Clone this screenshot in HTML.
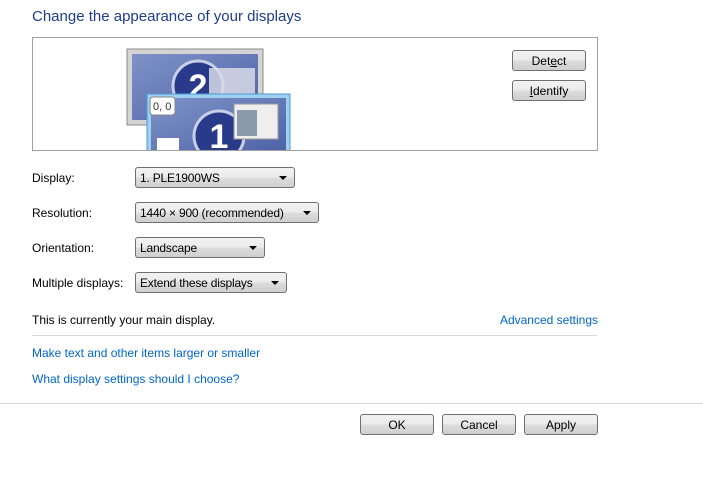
<!DOCTYPE html><html><head><style>
body{margin:0;width:703px;height:486px;background:#fff;font-family:"Liberation Sans",sans-serif;font-size:12px;color:#000;position:relative;overflow:hidden}
.a{position:absolute}
.t{font-size:15px;color:#1e3c8c}
.dd{position:absolute;height:19px;border:1px solid #707070;border-radius:3px;background:linear-gradient(#f2f2f2,#ebebeb 50%,#dddddd 50%,#cfcfcf);box-sizing:content-box;line-height:21px;padding-left:4px;letter-spacing:-0.2px}
.dd:after{content:"";position:absolute;right:7px;top:8px;border-left:4px solid transparent;border-right:4px solid transparent;border-top:4px solid #000}
.b{position:absolute;height:19px;border:1px solid #707070;border-radius:3px;background:linear-gradient(#f2f2f2,#ebebeb 50%,#dddddd 50%,#cfcfcf);text-align:center;line-height:21px}
.l{color:#0066cc}
</style></head><body>
<div class="a t" style="left:32px;top:8px">Change the appearance of your displays</div>
<div class="a" style="left:32px;top:37px;width:564px;height:112px;border:1px solid #a0a0a0;overflow:hidden">
 <svg width="564" height="112" style="position:absolute;left:0;top:0">
  <defs><linearGradient id="s" x1="0" y1="0" x2="1" y2="1"><stop offset="0" stop-color="#7f93c8"/><stop offset="1" stop-color="#4c61a6"/></linearGradient></defs>
  <rect x="94" y="11" width="136" height="76" fill="#d4d4d4" stroke="#8a8a8a"/>
  <rect x="99" y="16" width="126" height="66" fill="url(#s)"/>
  <circle cx="165" cy="48" r="25" fill="#2a3a8a" stroke="#c8cfe8" stroke-width="3"/>
  <text x="165" y="60" font-size="34" font-weight="bold" fill="#fff" text-anchor="middle" font-family="Liberation Sans">2</text>
  <rect x="176" y="30" width="46" height="26" fill="#d8dbe8" opacity=".85"/>
  <rect x="114" y="56" width="143" height="60" fill="#9fd0f0" stroke="#4a9ad8"/>
  <rect x="118" y="60" width="135" height="56" fill="url(#s)"/>
  <circle cx="186" cy="98" r="25" fill="#2a3a8a" stroke="#c8cfe8" stroke-width="3"/>
  <text x="186" y="110" font-size="34" font-weight="bold" fill="#fff" text-anchor="middle" font-family="Liberation Sans">1</text>
  <rect x="201" y="66" width="44" height="35" fill="#eee" stroke="#999"/>
  <rect x="204" y="72" width="20" height="26" fill="#8a9aaa"/>
  <rect x="117" y="59" width="25" height="18" rx="3" fill="#fff" stroke="#888"/>
  <text x="120" y="72" font-size="11" fill="#333" font-family="Liberation Sans">0, 0</text>
  <rect x="124" y="100" width="22" height="14" fill="#fff"/>
 </svg>
 <div class="b" style="left:479px;top:12px;width:72px">Det<u>e</u>ct</div>
 <div class="b" style="left:479px;top:42px;width:72px"><u>I</u>dentify</div>
</div>
<div class="a" style="left:32px;top:171px">Display:</div>
<div class="dd" style="left:135px;top:167px;width:154px">1. PLE1900WS</div>
<div class="a" style="left:32px;top:206px">Resolution:</div>
<div class="dd" style="left:135px;top:202px;width:178px">1440 × 900 (recommended)</div>
<div class="a" style="left:32px;top:241px">Orientation:</div>
<div class="dd" style="left:135px;top:237px;width:124px">Landscape</div>
<div class="a" style="left:32px;top:276px">Multiple displays:</div>
<div class="dd" style="left:135px;top:272px;width:146px">Extend these displays</div>
<div class="a" style="left:32px;top:313px">This is currently your main display.</div>
<div class="a l" style="right:105px;top:313px">Advanced settings</div>
<div class="a" style="left:32px;top:335px;width:565px;height:1px;background:#d8d8d8"></div>
<div class="a l" style="left:32px;top:346px">Make text and other items larger or smaller</div>
<div class="a l" style="left:32px;top:372px">What display settings should I choose?</div>
<div class="a" style="left:0;top:403px;width:703px;height:1px;background:#d8d8d8"></div>
<div class="b" style="left:360px;top:414px;width:72px">OK</div>
<div class="b" style="left:442px;top:414px;width:72px">Cancel</div>
<div class="b" style="left:524px;top:414px;width:72px">Apply</div>
</body></html>
